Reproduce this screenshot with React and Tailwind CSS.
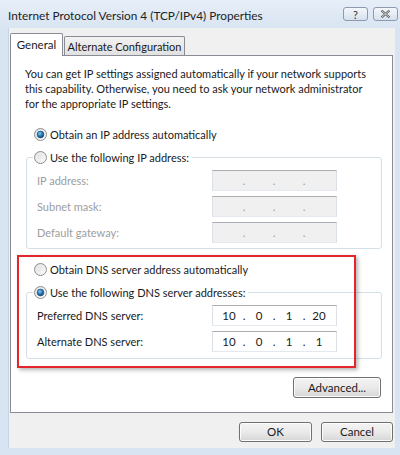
import { useId } from 'react'

function Radio({ checked, disabled }) {
    const id = useId()
    return (
        <svg width="13" height="13" viewBox="0 0 13 13" className="shrink-0">
            <defs>
                <linearGradient id={id + 'b'} x1="0" y1="0" x2="1" y2="1">
                    <stop offset="0" stopColor="#d9d9d9" />
                    <stop offset="1" stopColor="#ffffff" />
                </linearGradient>
                <radialGradient id={id + 'd'} cx="0.4" cy="0.35" r="0.7">
                    <stop offset="0" stopColor="#8ad0f2" />
                    <stop offset="0.5" stopColor="#2b7bb5" />
                    <stop offset="1" stopColor="#0e3f6e" />
                </radialGradient>
            </defs>
            <circle cx="6.5" cy="6.5" r="6" fill={`url(#${id}b)`} stroke={disabled ? '#b5b5b5' : '#8e8f8f'} />
            <circle cx="6.5" cy="6.5" r="4.2" fill="none" stroke="#f4f4f4" strokeWidth="0.8" />
            {checked && <circle cx="6.5" cy="6.5" r="3.4" fill={`url(#${id}d)`} stroke="#1d4f7d" strokeWidth="0.6" />}
        </svg>
    )
}

function RadioRow({ checked, children, legend }) {
    return (
        <div
            className={
                'flex items-center gap-[3px] h-[16px] whitespace-nowrap ' +
                (legend ? '-mt-[9px] ml-[6px] pl-[1px] pr-[3px] bg-white w-fit' : 'ml-[23px]')
            }
        >
            <Radio checked={checked} />
            <span>{children}</span>
        </div>
    )
}

function IpBox({ value, disabled }) {
    const parts = value || ['', '', '', '']
    return (
        <div
            className={
                'flex items-center w-[125px] h-[21px] border border-t-[#abadb3] border-x-[#dbdfe6] border-b-[#e3e9ef] pl-[3px] text-[11.5px] ' +
                (disabled ? 'bg-[#f0f0f0] text-[#a0a0a0]' : 'bg-white')
            }
        >
            {parts.map((p, i) => (
                <div key={i} className="flex items-center">
                    <span className="w-[26px] text-center">{p}</span>
                    {i < 3 && <span className="w-[4px] text-center">.</span>}
                </div>
            ))}
        </div>
    )
}

function FieldRow({ label, value, disabled }) {
    return (
        <div className="flex items-center h-[21px] pl-[10px]">
            <span className={'w-[175px] ' + (disabled ? 'text-[#9d9d9d]' : '')}>{label}</span>
            <IpBox value={value} disabled={disabled} />
        </div>
    )
}

function Button({ children, className }) {
    return (
        <button
            className={
                'h-[20px] border border-[#707070] rounded-[3px] bg-gradient-to-b from-[#f4f4f4] via-[#eaeaea] to-[#d6d6d6] shadow-[inset_0_0_0_1px_#fcfcfc] text-[11.5px] leading-none text-[#1a1a1a] ' +
                className
            }
        >
            {children}
        </button>
    )
}

export default function App() {
    return (
        <div className="w-[400px] h-[455px] flex flex-col bg-[#d8e4f1] font-['Lato',sans-serif] text-[11px] leading-[15px] text-[#1a1a1a] overflow-hidden">
            {/* title bar */}
            <div className="h-[28px] flex items-center pl-[8px] pt-[2px] bg-gradient-to-b from-[#e6eef8] to-[#d9e5f2]">
                <span className="flex-1 text-[11.8px] text-[#222] whitespace-nowrap">Internet Protocol Version 4 (TCP/IPv4) Properties</span>
                <div className="flex gap-[5px] mr-[2px] -mt-[2px]">
                    <div className="w-[25px] h-[14px] border border-[#8b9aae] rounded-[3px] bg-gradient-to-b from-[#f3f7fb] to-[#d6e1ee] flex items-center justify-center text-[11px] leading-none text-[#333]">
                        ?
                    </div>
                    <div className="w-[25px] h-[14px] border border-[#8b9aae] rounded-[3px] bg-gradient-to-b from-[#f3f7fb] to-[#d6e1ee] flex items-center justify-center">
                        <svg width="11" height="8" viewBox="0 0 11 8">
                            <path d="M1.5 0.5 L9.5 7.5 M9.5 0.5 L1.5 7.5" stroke="#555" strokeWidth="2.2" fill="none" />
                            <path d="M1.5 0.5 L9.5 7.5 M9.5 0.5 L1.5 7.5" stroke="#f4f7fb" strokeWidth="0.8" fill="none" />
                        </svg>
                    </div>
                </div>
            </div>

            {/* body */}
            <div className="h-[420px] mx-[5px] ml-[8px] bg-[#f0f0f0] border-l border-[#c5d3e2] pl-[1px] pr-[2px] pt-[5px] flex flex-col">
                {/* tabs */}
                <div className="flex items-end h-[22px] whitespace-nowrap">
                    <div className="relative z-10 -mb-px h-[23px] w-[53px] bg-white border border-b-0 border-[#898c95] rounded-t-[2px] flex items-center justify-center pb-[2px] text-[11.5px]">
                        General
                    </div>
                    <div className="h-[19px] w-[121px] ml-[1px] border border-b-0 border-[#898c95] rounded-t-[2px] bg-gradient-to-b from-[#f2f2f2] to-[#e1e1e1] flex items-center justify-center">
                        Alternate Configuration
                    </div>
                </div>

                {/* panel */}
                <div className="relative h-[358px] w-[383px] bg-white border border-[#898c95] flex flex-col">
                    <p className="pl-[14px] pt-[10px] whitespace-nowrap">
                        You can get IP settings assigned automatically if your network supports
                        <br />
                        this capability. Otherwise, you need to ask your network administrator
                        <br />
                        for the appropriate IP settings.
                    </p>

                    <div className="mt-[15px]">
                        <RadioRow checked>Obtain an IP address automatically</RadioRow>
                    </div>

                    <div className="mt-[15px] ml-[15px] mr-[10px] border border-[#d5dfe5] rounded-[3px] pb-[5px] flex flex-col gap-[5px]">
                        <RadioRow legend>Use the following IP address:</RadioRow>
                        <FieldRow label="IP address:" disabled />
                        <FieldRow label="Subnet mask:" disabled />
                        <FieldRow label="Default gateway:" disabled />
                    </div>

                    <div className="mt-[12px]">
                        <RadioRow>Obtain DNS server address automatically</RadioRow>
                    </div>

                    <div className="mt-[15px] ml-[15px] mr-[10px] border border-[#d5dfe5] rounded-[3px] pb-[6px] flex flex-col gap-[5px]">
                        <RadioRow legend checked>
                            Use the following DNS server addresses:
                        </RadioRow>
                        <FieldRow label="Preferred DNS server:" value={['10', '0', '1', '20']} />
                        <FieldRow label="Alternate DNS server:" value={['10', '0', '1', '1']} />
                    </div>

                    <div className="mt-[18px] mr-[11px] flex justify-end">
                        <Button className="w-[88px] h-[21px]">Advanced...</Button>
                    </div>

                    {/* red highlight drawn over the DNS section */}
                    <div className="absolute left-[6px] top-[199px] w-[339px] h-[113px] border-2 border-[#e3262b] shadow-[2px_2px_4px_rgba(0,0,0,0.3)] pointer-events-none" />
                </div>

                {/* dialog buttons */}
                <div className="mt-[9px] flex justify-end gap-[9px]">
                    <Button className="w-[73px]">OK</Button>
                    <Button className="w-[72px]">Cancel</Button>
                </div>
            </div>
        </div>
    )
}
